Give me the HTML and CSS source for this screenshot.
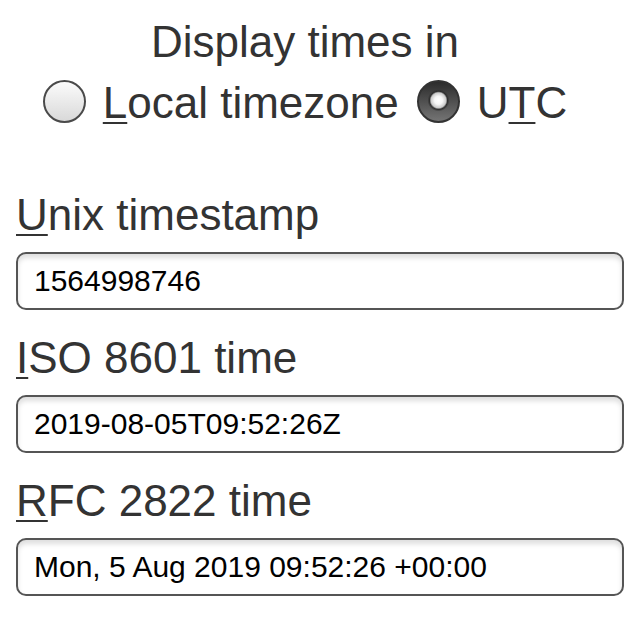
FILE: index.html
```html
<!DOCTYPE html>
<html lang="en">
<head>
<meta charset="utf-8">
<title>Timestamp converter</title>
<link rel="stylesheet" href="styles.css">
</head>
<body>
<div class="mode">
  <div class="mode-title">Display times in</div>
  <div class="mode-options">
    <label class="option"><input type="radio" name="tz" class="radio"><span><u>L</u>ocal timezone</span></label>
    <label class="option"><input type="radio" name="tz" class="radio" checked><span>U<u>T</u>C</span></label>
  </div>
</div>
<div class="fields">
  <div class="field">
    <label class="field-label" for="unix"><u>U</u>nix timestamp</label>
    <input class="field-input" id="unix" type="text" value="1564998746">
  </div>
  <div class="field">
    <label class="field-label" for="iso"><u>I</u>SO 8601 time</label>
    <input class="field-input" id="iso" type="text" value="2019-08-05T09:52:26Z">
  </div>
  <div class="field">
    <label class="field-label" for="rfc"><u>R</u>FC 2822 time</label>
    <input class="field-input" id="rfc" type="text" value="Mon, 5 Aug 2019 09:52:26 +00:00">
  </div>
</div>
</body>
</html>
```
FILE: styles.css
```css
html, body {
  margin: 0;
  background: #fff;
}
body {
  padding: 0 16px;
  font-family: "Liberation Sans", Arial, Helvetica, sans-serif;
  color: #333;
  font-size: 44px;
}
u {
  text-decoration-thickness: 2px;
  text-underline-offset: 4px;
}
.mode {
  padding: 17px 30px 0 0;
  text-align: center;
}
.mode-title {
  line-height: 50px;
}
.mode-options {
  margin-top: 11px;
  display: flex;
  justify-content: center;
  align-items: center;
  gap: 18px;
  line-height: 50px;
}
.option {
  display: flex;
  align-items: center;
  gap: 17px;
}
.radio {
  -webkit-appearance: none;
  appearance: none;
  margin: 0;
  width: 43px;
  height: 43px;
  box-sizing: border-box;
  border: 2px solid #4a4a4a;
  border-radius: 50%;
  background: linear-gradient(#fbfbfb, #d9d9d9);
  position: relative;
  top: -2px;
}
.radio:checked {
  border-color: #333;
  background:
    radial-gradient(circle at 50% 47%, #ffffff 0, #f6f6f6 4px, #cacaca 7.5px, #2e2e2e 9px, rgba(0,0,0,0) 11px),
    linear-gradient(#2c2c2c, #747474);
}
.fields {
  margin-top: 62px;
  display: flex;
  flex-direction: column;
  gap: 23px;
}
.field {
  display: flex;
  flex-direction: column;
  gap: 12px;
}
.field-label {
  line-height: 50px;
}
.field-input {
  box-sizing: border-box;
  width: 100%;
  height: 58px;
  margin: 0;
  padding: 0 16px;
  border: 2px solid #555;
  border-radius: 10px;
  box-shadow: inset 0 4px 5px rgba(0, 0, 0, 0.13);
  font-family: "Liberation Sans", Arial, Helvetica, sans-serif;
  font-size: 30px;
  color: #000;
  background: #fff;
  outline: none;
}
```
